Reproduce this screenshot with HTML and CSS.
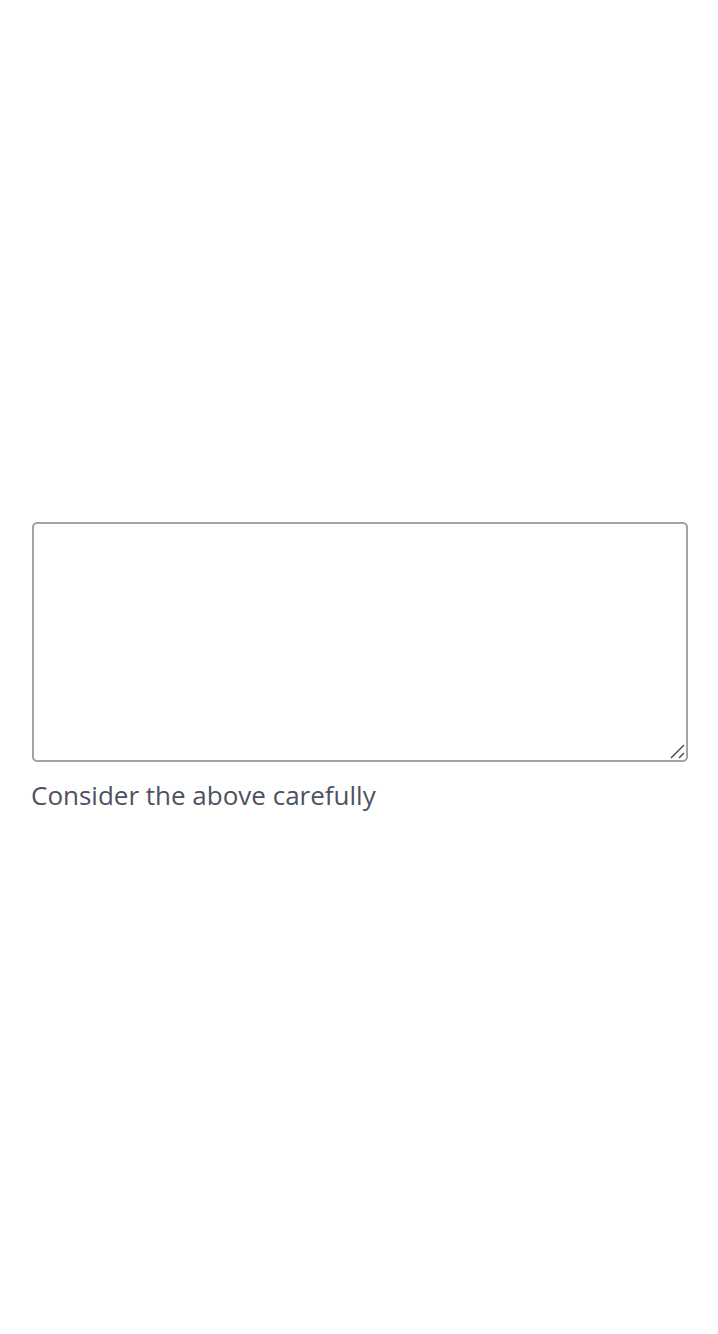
FILE: index.html
```html
<!DOCTYPE html>
<html>
<head>
<meta charset="utf-8">
<link rel="stylesheet" href="styles.css">
</head>
<body>
<main class="page">
  <div class="field">
    <div class="wrap">
      <textarea class="box"></textarea>
      <svg class="grip" width="16" height="16" viewBox="0 0 16 16">
        <line x1="2" y1="15" x2="15" y2="2" stroke="#4a4a4a" stroke-width="1.5"/>
        <line x1="10" y1="15" x2="15" y2="10" stroke="#4a4a4a" stroke-width="1.5"/>
      </svg>
    </div>
    <p class="hint">Consider the above carefully</p>
  </div>
</main>
</body>
</html>
```
FILE: styles.css
```css
html, body {
  margin: 0;
  padding: 0;
  background: #ffffff;
}
.page {
  min-height: 1334px;
  display: flex;
  flex-direction: column;
  justify-content: center;
  padding: 2px 30px 0 32px;
  box-sizing: border-box;
}
.field {
  display: flex;
  flex-direction: column;
}
.wrap {
  position: relative;
  width: 656px;
  height: 240px;
}
.box {
  display: block;
  width: 656px;
  height: 240px;
  box-sizing: border-box;
  border: 2px solid #a3a3a3;
  border-radius: 5px;
  background: #fff;
  margin: 0;
  padding: 8px;
  resize: none;
  font-family: "Open Sans", sans-serif;
  font-size: 24px;
}
.grip {
  position: absolute;
  right: 3px;
  bottom: 3px;
  pointer-events: none;
}
.hint {
  margin: 15px 0 0 -1px;
  font-family: "Open Sans", sans-serif;
  font-size: 26px;
  line-height: 37px;
  color: #4b5361;
}
```
